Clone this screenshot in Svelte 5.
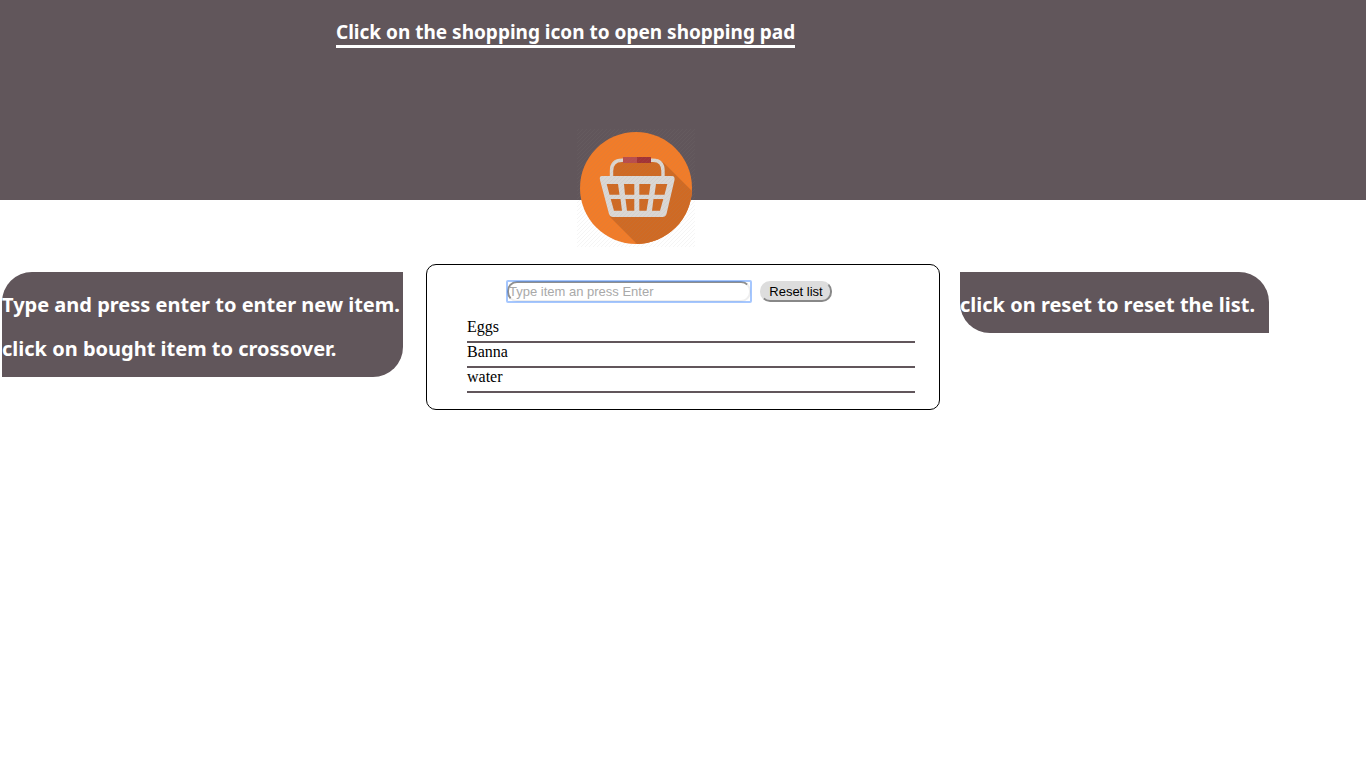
<script>
  let open = $state(true);
  let draft = $state('');
  let items = $state([
    { name: 'Eggs', bought: false },
    { name: 'Banna', bought: false },
    { name: 'water', bought: false }
  ]);

  function add(event) {
    event.preventDefault();
    const name = draft.trim();
    if (!name) return;
    items.push({ name, bought: false });
    draft = '';
  }

  function reset() {
    items = [];
  }
</script>

<header>
  <h1>Click on the shopping icon to open shopping pad</h1>
  <button class="basket" type="button" aria-label="Shopping pad" aria-expanded={open} onclick={() => (open = !open)}>
    <svg viewBox="0 0 120 120" aria-hidden="true">
      <defs>
        <pattern id="hatch" width="4" height="4" patternUnits="userSpaceOnUse">
          <path d="M-1 1 1 -1M0 4 4 0M3 5 5 3" stroke="#888" stroke-width=".6" opacity=".14" />
        </pattern>
        <clipPath id="disc"><circle cx="60" cy="60" r="56" /></clipPath>
      </defs>
      <rect x="1" y="1" width="118" height="118" fill="url(#hatch)" />
      <circle cx="60" cy="60" r="56" fill="#f17c29" />
      <path clip-path="url(#disc)" d="M88 35 130 77V130H75L34 89 25 52 35 50V42L44 32H83Z" fill="#cf6a24" />
      <path d="M35.500 52V43Q35.500 32.200 46 32.200H77Q87 32.200 87 43V52" fill="none" stroke="#dbd5cf" stroke-width="3.400" />
      <path d="M47 29H61V35H47Z" fill="#b94e4c" />
      <path d="M61 29H75V35H61Z" fill="#a23436" />
      <path
        fill="#dad7d4"
        fill-rule="evenodd"
        d="M26 48H96Q99 48 98.500 52L90.500 86Q89.500 89 86.500 89H37Q34 89 33 86L24 52Q23 48 26 48Z
           M30.700 56 33.500 66.700H43.500L42 56Z M48 56 49 66.700H58.300V56Z M63.300 56V66.700H73L74.500 56Z M80 56 78.500 66.700H88.500L91.300 56Z
           M34.700 71 38 82.700H46L44.500 71Z M49.500 71 51 82.700H58.300V71Z M63.300 71V82.700H70.500L72.500 71Z M77.500 71 76 82.700H84L87.300 71Z"
      />
      <circle cx="60" cy="60" r="56" fill="url(#hatch)" />
    </svg>
  </button>
</header>

<main>
  <aside class="note enter">
    <p>Type and press enter to enter new item.</p>
    <p>click on bought item to crossover.</p>
  </aside>

  {#if open}
    <section class="pad">
      <form onsubmit={add}>
        <div class="field">
          <input type="text" aria-label="New item" placeholder="Type item an press Enter" bind:value={draft} />
        </div>
        <button class="reset" type="button" onclick={reset}>Reset list</button>
      </form>
      <ul>
        {#each items as item}
          <li>
            <button class="item" class:bought={item.bought} type="button" onclick={() => (item.bought = !item.bought)}>{item.name}</button>
          </li>
        {/each}
      </ul>
    </section>
  {/if}

  <aside class="note clear">
    <p>click on reset to reset the list.</p>
  </aside>
</main>

<style>
  :global(body) {
    margin: 0;
    background: #fff;
    font-family: "Liberation Serif", "Times New Roman", serif;
  }

  header {
    display: flex;
    flex-direction: column;
    align-items: flex-start;
    box-sizing: border-box;
    height: 200px;
    padding-top: 20px;
    background: #61565b;
  }

  h1 {
    margin: 0 0 80px 336px;
    border-bottom: 3px solid #fff;
    color: #fff;
    font: bold 19px/25px "Comic Sans MS", "Noto Sans", sans-serif;
    white-space: nowrap;
  }

  .basket {
    flex: none;
    width: 120px;
    height: 120px;
    margin-left: 576px;
    padding: 0;
    border: 0;
    background: none;
    cursor: pointer;
  }

  .basket svg {
    display: block;
    width: 100%;
  }

  main {
    display: flex;
    align-items: flex-start;
    margin-top: 64px;
    padding: 0 97px 0 2px;
  }

  .note {
    display: flex;
    flex: none;
    flex-direction: column;
    gap: 16px;
    margin-top: 8px;
    padding: 19px 0 14px;
    background: #61565b;
    color: #fff;
    font: bold 20px/28px "Comic Sans MS", "Noto Sans", sans-serif;
    white-space: nowrap;
  }

  .note p {
    margin: 0;
  }

  .enter {
    width: 401px;
    border-radius: 30px 0 30px 0;
  }

  .clear {
    width: 309px;
    border-radius: 0 30px 0 30px;
  }

  .pad {
    flex: 1;
    margin: 0 20px 0 23px;
    padding: 15px 24px 16px 39px;
    border: 1px solid #000;
    border-radius: 10px;
  }

  form {
    display: flex;
    align-items: center;
    gap: 8px;
    margin: 0 0 15px 40px;
  }

  .field {
    position: relative;
    display: flex;
    padding: 1px;
  }

  /* Square focus ring, painted over the rounded input border */
  .field::after {
    position: absolute;
    inset: 0;
    border: 2px solid rgb(77 144 254 / 50%);
    border-radius: 2px;
    content: "";
    pointer-events: none;
  }

  input {
    box-sizing: border-box;
    width: 244px;
    height: 21px;
    padding: 1px 0;
    border: 2px solid;
    border-color: #8f8f8f #eee #eee #8f8f8f;
    border-radius: 10px;
    outline: 0;
    background: #fff;
    font: 13px/15px "Liberation Sans", Arial, sans-serif;
  }

  input::placeholder {
    color: #a9a9a9;
    opacity: 1;
  }

  .reset {
    box-sizing: border-box;
    min-width: 72px;
    height: 21px;
    padding: 0 6px;
    border: 2px solid;
    border-color: #ddd #888 #888 #ddd;
    border-radius: 10px;
    background: #ddd;
    color: #000;
    font: 13px/15px "Liberation Sans", Arial, sans-serif;
    white-space: nowrap;
  }

  ul {
    margin: 0 0 0 1px;
    padding: 0;
    list-style: none;
  }

  li {
    border-bottom: 2px solid #61565b;
  }

  .item {
    display: block;
    width: 100%;
    padding: 0 0 5px;
    border: 0;
    background: none;
    color: #000;
    font: 16px/18px "Liberation Serif", "Times New Roman", serif;
    text-align: left;
    cursor: pointer;
  }

  .bought {
    text-decoration: line-through;
  }
</style>
